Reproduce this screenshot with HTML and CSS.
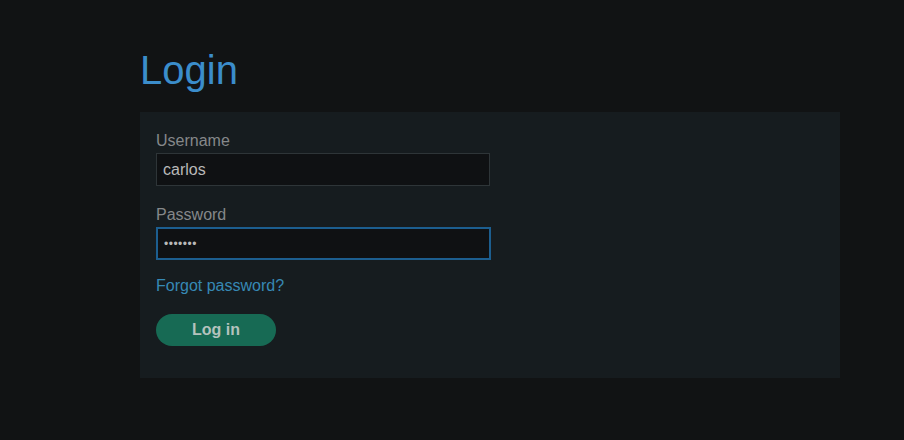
FILE: index.html
```html
<!DOCTYPE html>
<html>
<head>
<meta charset="utf-8">
<link rel="stylesheet" href="styles.css">
</head>
<body>
<main class="page">
  <h1 class="title">Login</h1>
  <form class="panel">
    <label class="label" for="u">Username</label>
    <input class="field" id="u" type="text" value="carlos">
    <label class="label label-gap" for="p">Password</label>
    <input class="field field-focus" id="p" type="password" value="montoya">
    <a class="forgot" href="#">Forgot password?</a>
    <button class="btn" type="button">Log in</button>
  </form>
</main>
</body>
</html>
```
FILE: styles.css
```css
html, body {
  margin: 0;
  padding: 0;
  background: #111314;
  font-family: "Liberation Sans", Arial, sans-serif;
}
.page {
  padding: 47px 0 0 140px;
  width: 700px;
}
.title {
  margin: 0;
  font-size: 40px;
  line-height: 46px;
  font-weight: 400;
  color: #3b8dcb;
}
.panel {
  margin-top: 19px;
  background: #161c1f;
  padding: 20px 16px 32px;
  display: flex;
  flex-direction: column;
  align-items: flex-start;
}
.label {
  font-size: 16px;
  line-height: 18px;
  color: #85888a;
  margin-bottom: 3px;
}
.label-gap {
  margin-top: 20px;
  margin-bottom: 3px;
}
.field {
  box-sizing: border-box;
  width: 334px;
  height: 33px;
  margin: 0;
  padding: 0 6px;
  background: #0f1113;
  border: 1px solid #2e3538;
  color: #b9b9b9;
  font-family: "Liberation Sans", Arial, sans-serif;
  font-size: 16px;
  outline: none;
}
.field-focus {
  border: 2px solid #1c5e8f;
  padding: 0 6px;
  height: 33px;
  width: 335px;
  font-size: 12px;
  letter-spacing: 0.5px;
}
.forgot {
  margin-top: 17px;
  font-size: 16px;
  line-height: 18px;
  color: #3689b5;
  text-decoration: none;
}
.btn {
  margin-top: 19px;
  width: 120px;
  height: 32px;
  border: 0;
  border-radius: 16px;
  background: #176a54;
  color: #b4c2bd;
  font-family: "Liberation Sans", Arial, sans-serif;
  font-size: 16px;
  font-weight: 700;
  padding: 0;
}
```
